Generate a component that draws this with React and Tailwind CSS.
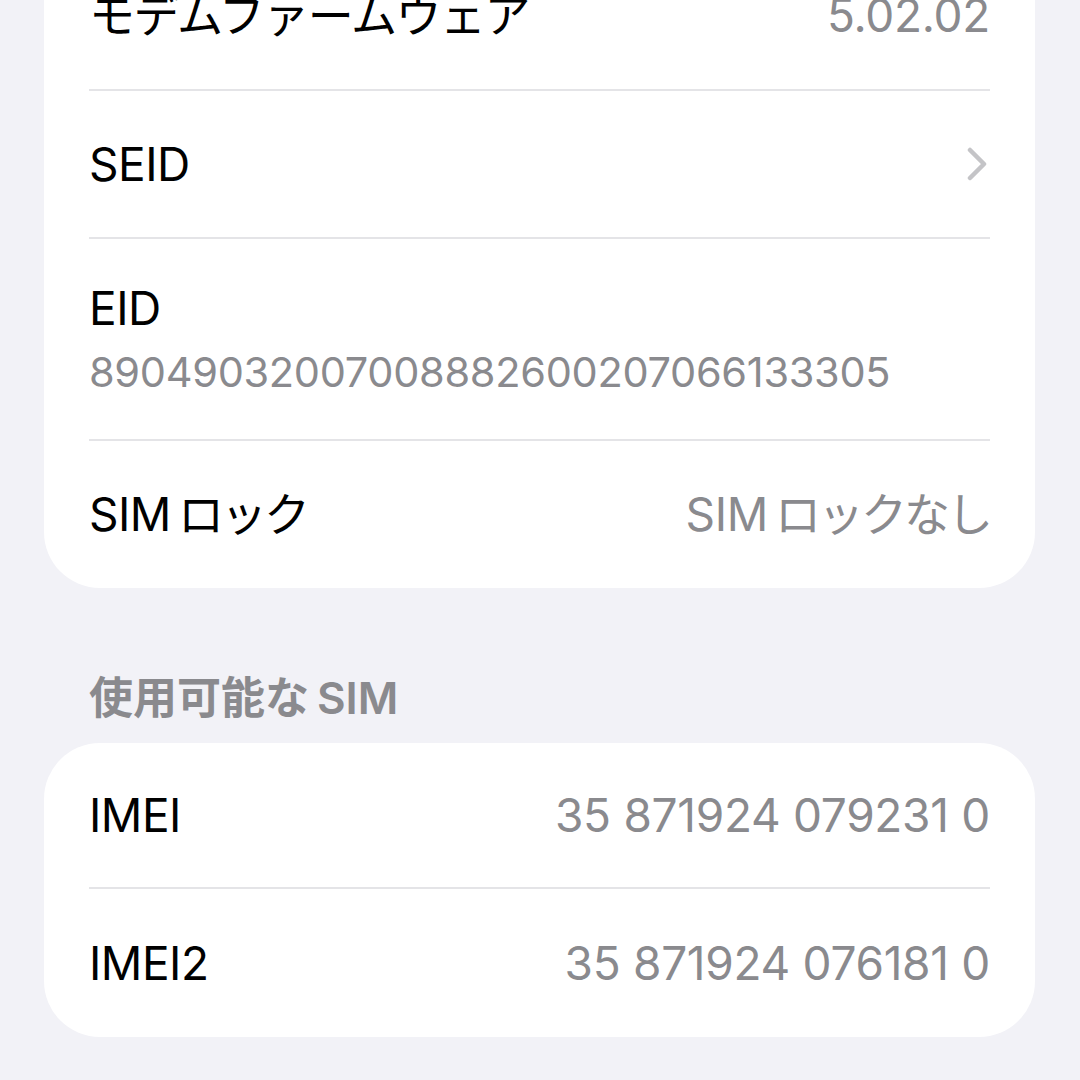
import React from "react";

const font = { fontFamily: '"Inter", "Noto Sans CJK JP", sans-serif' };

function Row({ label, value, chevron, h = "h-[146px]" }) {
  return (
    <div className={`flex items-center justify-between ${h}`}>
      <span className="text-[46px] text-black tracking-[-0.5px]">{label}</span>
      {value && <span className="text-[46px] text-[#8a8a8e] tracking-[-0.3px]">{value}</span>}
      {chevron && (
        <svg width="22" height="34" viewBox="0 0 22 34" className="mr-[2px]">
          <path d="M4 3 L18 17 L4 31" fill="none" stroke="#c4c4c7" strokeWidth="4.5" strokeLinecap="round" strokeLinejoin="round" />
        </svg>
      )}
    </div>
  );
}

const Sep = () => <div className="h-[2px] bg-[#e4e4e7]" />;

// SIM + katakana with the narrow gap iOS puts between latin and kana
const SimLock = ({ suffix }) => (
  <>
    SIM<span className="ml-[7px] tracking-[-3px]">{suffix}</span>
  </>
);

export default function App() {
  return (
    <div className="w-[1080px] h-[1080px] overflow-hidden bg-[#f2f2f7] pl-[44px] pr-[45px]" style={font}>

      {/* device info card */}
      <div className="-mt-[59px] bg-white rounded-[56px] px-[45px]">
        <Row label={<span className="tracking-[-1.5px]">モデムファームウェア</span>} value="5.02.02" h="h-[148px]" />
        <Sep />
        <Row label="SEID" chevron h="h-[146px]" />
        <Sep />
        <div className="h-[200px] flex flex-col justify-center">
          <span className="text-[46px] text-black leading-[56px] tracking-[-0.5px]">EID</span>
          <span className="text-[41.5px] text-[#8a8a8e] leading-[52px] mt-[10px] tracking-[-0.3px]">89049032007008882600207066133305</span>
        </div>
        <Sep />
        <Row label={<SimLock suffix="ロック" />} value={<SimLock suffix="ロックなし" />} h="h-[147px]" />
      </div>

      {/* available SIM */}
      <div className="pt-[82px] pb-[17px] pl-[45px] leading-[56px] text-[44px] font-semibold text-[#8a8a8e]">
        使用可能な<span className="ml-[8px]">SIM</span>
      </div>

      <div className="bg-white rounded-[56px] px-[45px]">
        <Row label="IMEI" value="35 871924 079231 0" h="h-[144px]" />
        <Sep />
        <Row label="IMEI2" value="35 871924 076181 0" h="h-[148px]" />
      </div>
    </div>
  );
}
